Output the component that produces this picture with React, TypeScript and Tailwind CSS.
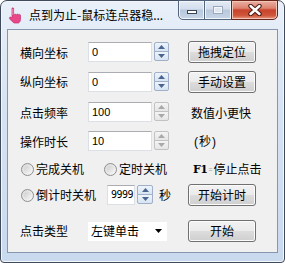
import React from "react";

const cjk = "font-['Noto_Sans_CJK_SC','Noto_Sans',sans-serif]";

function HandIcon() {
  return (
    <svg width="15" height="17" viewBox="0 0 15 17">
      <path
        d="M4 1.5c0-.9 1.6-.9 1.6 0V8l.6-.2c.4-1 1.6-1 1.9 0l.5-.1c.4-.9 1.6-.8 1.8.1l.4-.1c.6-.6 1.7-.3 1.7.7v3.8c0 1.9-.9 3.2-2.1 3.8H6.2C4.9 15.3 3.4 13.7 2 12.2c-.8-.9-.8-1.9.4-2.1L4 10.8z"
        fill="#e8478a"
        stroke="#c2306c"
        strokeWidth="0.7"
      />
      <path d="M4.8 2v6" stroke="#f6a3c6" strokeWidth="0.8" />
    </svg>
  );
}

function CaptionButtons() {
  return (
    <div className="flex -mt-[1px] self-start">
      <div className="w-[27px] h-[20px] rounded-bl-[5px] border border-[#53647d] bg-[linear-gradient(#e4ebf4_0%,#d3dded_45%,#b9c8dc_50%,#c7d5e7_100%)] shadow-[inset_0_0_0_1px_#f2f6fb] flex items-center justify-center">
        <div className="w-[10px] h-[4px] mt-[3px] bg-white border border-[#39465a]" />
      </div>
      <div className="w-[28px] h-[20px] -ml-[1px] border border-[#53647d] bg-[linear-gradient(#e4ebf4_0%,#d3dded_45%,#b9c8dc_50%,#c7d5e7_100%)] shadow-[inset_0_0_0_1px_#f2f6fb] flex items-center justify-center">
        <div className="w-[10px] h-[8px] border border-[#9aa8ba] bg-[#dfe6ef] shadow-[inset_0_0_0_1px_#f4f7fb]" />
      </div>
      <div className="w-[47px] h-[20px] -ml-[1px] rounded-br-[5px] border border-[#6b2418] bg-[linear-gradient(#eab0a2_0%,#dd8270_40%,#c8432b_50%,#d0553b_80%,#e49a82_100%)] shadow-[inset_0_0_0_1px_#f1c5b8] flex items-center justify-center">
        <svg width="14" height="12" viewBox="0 0 14 12">
          <path d="M2.5 2l9 8M11.5 2l-9 8" stroke="#4a1a12" strokeWidth="4.4" strokeLinecap="round" />
          <path d="M2.5 2l9 8M11.5 2l-9 8" stroke="#ffffff" strokeWidth="2.4" strokeLinecap="round" />
        </svg>
      </div>
    </div>
  );
}

function Arrow({up, color}: {up: boolean; color: string}) {
  return (
    <svg width="7" height="4" viewBox="0 0 7 4">
      <path d={up ? "M3.5 0L7 4H0z" : "M0 0h7L3.5 4z"} fill={color} />
    </svg>
  );
}

function Spin({active, w = 15}: {active: boolean; w?: number}) {
  const half = active
    ? "bg-[linear-gradient(#eef4fb,#d8e4f3)] border-[#9fb0c8]"
    : "bg-[linear-gradient(#f4f4f4,#e6e6e6)] border-[#c2c2c2]";
  const col = active ? "#4a6590" : "#a9a9a9";
  return (
    <div className="flex flex-col h-[20px] shrink-0" style={{width: w}}>
      <div className={`h-[10px] border rounded-t-[2px] flex items-center justify-center ${half}`}>
        <Arrow up color={col} />
      </div>
      <div className={`h-[10px] -mt-[1px] border rounded-b-[2px] flex items-center justify-center ${half}`}>
        <Arrow up={false} color={col} />
      </div>
    </div>
  );
}

function NumInput({value, w = 64, small}: {value: string; w?: number; small?: boolean}) {
  return (
    <div
      className={`h-[20px] shrink-0 bg-white border border-[#dbdfe6] border-t-[#abadb3] flex items-center pl-[3px] text-black ${
        small ? "font-['DejaVu_Sans_Mono',monospace] text-[10px] tracking-[-0.5px]" : "font-['Liberation_Sans',sans-serif] text-[11px]"
      }`}
      style={{width: w}}
    >
      {value}
    </div>
  );
}

function Btn({label}: {label: string}) {
  return (
    <div className="ml-auto shrink-0 w-[68px] h-[22px] rounded-[3px] border border-[#707070] bg-[linear-gradient(#f2f2f2_0%,#ebebeb_50%,#dddddd_50%,#cfcfcf_100%)] shadow-[inset_0_0_0_1px_#fbfbfb] flex items-center justify-center text-[12px] leading-none text-black">
      {label}
    </div>
  );
}

function Radio() {
  return (
    <div className="w-[13px] h-[13px] shrink-0 rounded-full border border-[#8e8f8f] bg-[linear-gradient(135deg,#d9d9d9,#f7f7f7)] flex items-center justify-center">
      <div className="w-[7px] h-[7px] rounded-full bg-[linear-gradient(135deg,#cfcfcf,#f4f4f4)]" />
    </div>
  );
}

export default function App() {
  return (
    <div className={`w-[285px] h-[263px] bg-white ${cjk}`}>
      <div className="w-[285px] h-[263px] flex flex-col rounded-t-[7px] rounded-b-[4px] border border-[#3f4a5a] bg-[linear-gradient(#e9f0f9_0%,#d6e3f3_40%,#c9d9ee_100%)] shadow-[inset_0_0_0_1px_#f3f7fc] px-[6px]">
        <div className="h-[28px] flex items-start">
          <div className="ml-[1px] mt-[6px]">
            <HandIcon />
          </div>
          <div className="ml-[6px] mt-[7px] text-[12px] leading-[14px] text-black whitespace-nowrap">
            点到为止-鼠标连点器稳...
          </div>
          <div className="ml-auto">
            <CaptionButtons />
          </div>
        </div>

        <div className="w-[271px] h-[224px] border border-[#8596ad] bg-[#f0f0f0] pt-[10px] pl-[12px] pr-[21px] text-[12px] leading-none text-black whitespace-nowrap">
          <div className="h-[24px] flex items-center">
            <div className="w-[68px] shrink-0 pt-[2px]">横向坐标</div>
            <NumInput value="0" />
            <div className="ml-[2px]">
              <Spin active />
            </div>
            <Btn label="拖拽定位" />
          </div>

          <div className="h-[24px] mt-[6px] flex items-center">
            <div className="w-[68px] shrink-0">纵向坐标</div>
            <NumInput value="0" />
            <div className="ml-[2px]">
              <Spin active />
            </div>
            <Btn label="手动设置" />
          </div>

          <div className="h-[24px] mt-[6px] flex items-center">
            <div className="w-[68px] shrink-0 pt-[2px]">点击频率</div>
            <NumInput value="100" />
            <div className="ml-[2px]">
              <Spin active={false} />
            </div>
            <div className="ml-[22px] pt-[2px]">数值小更快</div>
          </div>

          <div className="h-[24px] mt-[5px] flex items-center">
            <div className="w-[68px] shrink-0 pt-[2px]">操作时长</div>
            <NumInput value="10" />
            <div className="ml-[2px]">
              <Spin active={false} />
            </div>
            <div className="ml-[25px] pt-[2px] font-['Liberation_Sans','Noto_Sans_CJK_SC',sans-serif]">
              (<span className="mx-[1px]">秒</span>)
            </div>
          </div>

          <div className="h-[24px] mt-[4px] flex items-center">
            <div className="ml-[1px]">
              <Radio />
            </div>
            <div className="ml-[2px] shrink-0">完成关机</div>
            <div className="ml-[20px]">
              <Radio />
            </div>
            <div className="ml-[2px] shrink-0">定时关机</div>
            <div className="ml-[26px] shrink-0 flex items-center">
              <span className="font-['DejaVu_Serif',serif] font-bold text-[11px] tracking-[-0.5px]">F1</span>
              <span className="text-[7px] text-[#9a9a9a] mx-[1px]">=</span>
              <span>停止点击</span>
            </div>
          </div>

          <div className="h-[24px] mt-[2px] flex items-center">
            <div className="ml-[1px]">
              <Radio />
            </div>
            <div className="ml-[2px] shrink-0">倒计时关机</div>
            <div className="ml-[11px]">
              <NumInput value="9999" w={28} small />
            </div>
            <div className="ml-[2px]">
              <Spin active w={16} />
            </div>
            <div className="ml-[6px] shrink-0">秒</div>
            <Btn label="开始计时" />
          </div>

          <div className="h-[24px] mt-[12px] flex items-center">
            <div className="w-[68px] shrink-0">点击类型</div>
            <div className="w-[79px] h-[19px] shrink-0 bg-white flex items-center pl-[3px] pr-[5px]">
              <span>左键单击</span>
              <svg className="ml-auto" width="7" height="4" viewBox="0 0 7 4">
                <path d="M0 0h7L3.5 4z" fill="#000" />
              </svg>
            </div>
            <Btn label="开始" />
          </div>
        </div>
      </div>
    </div>
  );
}
